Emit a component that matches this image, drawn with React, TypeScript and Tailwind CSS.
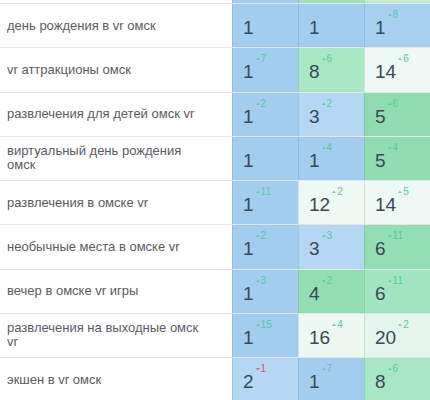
import React from "react";

type Cell = { value: number; bg: string; delta?: string; down?: boolean };
type Row = { label: React.ReactNode; cells: Cell[] };

const rows: Row[] = [
  {
    label: "день рождения в vr омск",
    cells: [
      { value: 1, bg: "bg-[#a3cdee]" },
      { value: 1, bg: "bg-[#a3cdee]" },
      { value: 1, bg: "bg-[#a7d0ef]", delta: "8" },
    ],
  },
  {
    label: "vr аттракционы омск",
    cells: [
      { value: 1, bg: "bg-[#a3cdee]", delta: "7" },
      { value: 8, bg: "bg-[#a9e8c4]", delta: "6" },
      { value: 14, bg: "bg-[#eef8f4]", delta: "6" },
    ],
  },
  {
    label: "развлечения для детей омск vr",
    cells: [
      { value: 1, bg: "bg-[#a3cdee]", delta: "2" },
      { value: 3, bg: "bg-[#b5d8f2]", delta: "2" },
      { value: 5, bg: "bg-[#8fdcb1]", delta: "6" },
    ],
  },
  {
    label: (
      <>
        виртуальный день рождения
        <br />
        омск
      </>
    ),
    cells: [
      { value: 1, bg: "bg-[#a3cdee]" },
      { value: 1, bg: "bg-[#a3cdee]", delta: "4" },
      { value: 5, bg: "bg-[#91ddb2]", delta: "4" },
    ],
  },
  {
    label: "развлечения в омске vr",
    cells: [
      { value: 1, bg: "bg-[#a3cdee]", delta: "11" },
      { value: 12, bg: "bg-[#eff9f4]", delta: "2" },
      { value: 14, bg: "bg-[#eef8f4]", delta: "5" },
    ],
  },
  {
    label: "необычные места в омске vr",
    cells: [
      { value: 1, bg: "bg-[#a3cdee]", delta: "2" },
      { value: 3, bg: "bg-[#b5d8f2]", delta: "3" },
      { value: 6, bg: "bg-[#93dfb4]", delta: "11" },
    ],
  },
  {
    label: "вечер в омске vr игры",
    cells: [
      { value: 1, bg: "bg-[#a3cdee]", delta: "3" },
      { value: 4, bg: "bg-[#92deb2]", delta: "2" },
      { value: 6, bg: "bg-[#a2e5c0]", delta: "11" },
    ],
  },
  {
    label: (
      <>
        развлечения на выходные омск
        <br />
        vr
      </>
    ),
    cells: [
      { value: 1, bg: "bg-[#a3cdee]", delta: "15" },
      { value: 16, bg: "bg-[#eef8f3]", delta: "4" },
      { value: 20, bg: "bg-[#e3f5ec]", delta: "2" },
    ],
  },
  {
    label: "экшен в vr омск",
    cells: [
      { value: 2, bg: "bg-[#b5d8f2]", delta: "1", down: true },
      { value: 1, bg: "bg-[#a3cdee]", delta: "7" },
      { value: 8, bg: "bg-[#a8e7c5]", delta: "6" },
    ],
  },
];

const Delta = ({ delta, down }: { delta: string; down?: boolean }) => (
  <span
    className={`absolute left-full top-[-8px] ml-[2px] flex items-center gap-[1px] text-[10px] leading-none ${
      down ? "text-[#e8485c]" : "text-[#55c99e]"
    }`}
  >
    <svg width="4" height="4" viewBox="0 0 4 4" className="opacity-80">
      {down ? <path d="M0 1h4L2 3.5z" fill="currentColor" /> : <path d="M0 3h4L2 0.5z" fill="currentColor" />}
    </svg>
    {delta}
  </span>
);

const ValueCell = ({ cell }: { cell: Cell }) => (
  <div className={`w-[66px] shrink-0 flex items-center pl-[10px] pt-[4px] border-l border-black/10 ${cell.bg}`}>
    <span className="relative text-[19px] leading-none text-[#3b4756]">
      {cell.value}
      {cell.delta && <Delta delta={cell.delta} down={cell.down} />}
    </span>
  </div>
);

export default function App() {
  return (
    <div
      className="w-[430px] h-[400px] overflow-hidden bg-white"
      style={{ fontFamily: '"Liberation Sans", Arial, sans-serif' }}
    >
      {/* tail of the previous row */}
      <div className="flex h-[3px]">
        <div className="w-[232px] shrink-0 bg-white" />
        <div className="w-[66px] shrink-0 bg-[#a5cdee] border-l border-black/10" />
        <div className="w-[66px] shrink-0 bg-[#9de3bb] border-l border-black/10" />
        <div className="w-[66px] shrink-0 bg-[#bfead0] border-l border-black/10" />
      </div>

      {rows.map((row, i) => (
        <div key={i} className="flex h-[44.25px] border-t-[1.5px] border-black/10">
          <div className="w-[232px] shrink-0 flex items-center pl-[7px] pr-4 text-[13px] leading-[14px] text-[#585c61]">
            <span>{row.label}</span>
          </div>
          {row.cells.map((cell, j) => (
            <ValueCell key={j} cell={cell} />
          ))}
        </div>
      ))}
    </div>
  );
}
